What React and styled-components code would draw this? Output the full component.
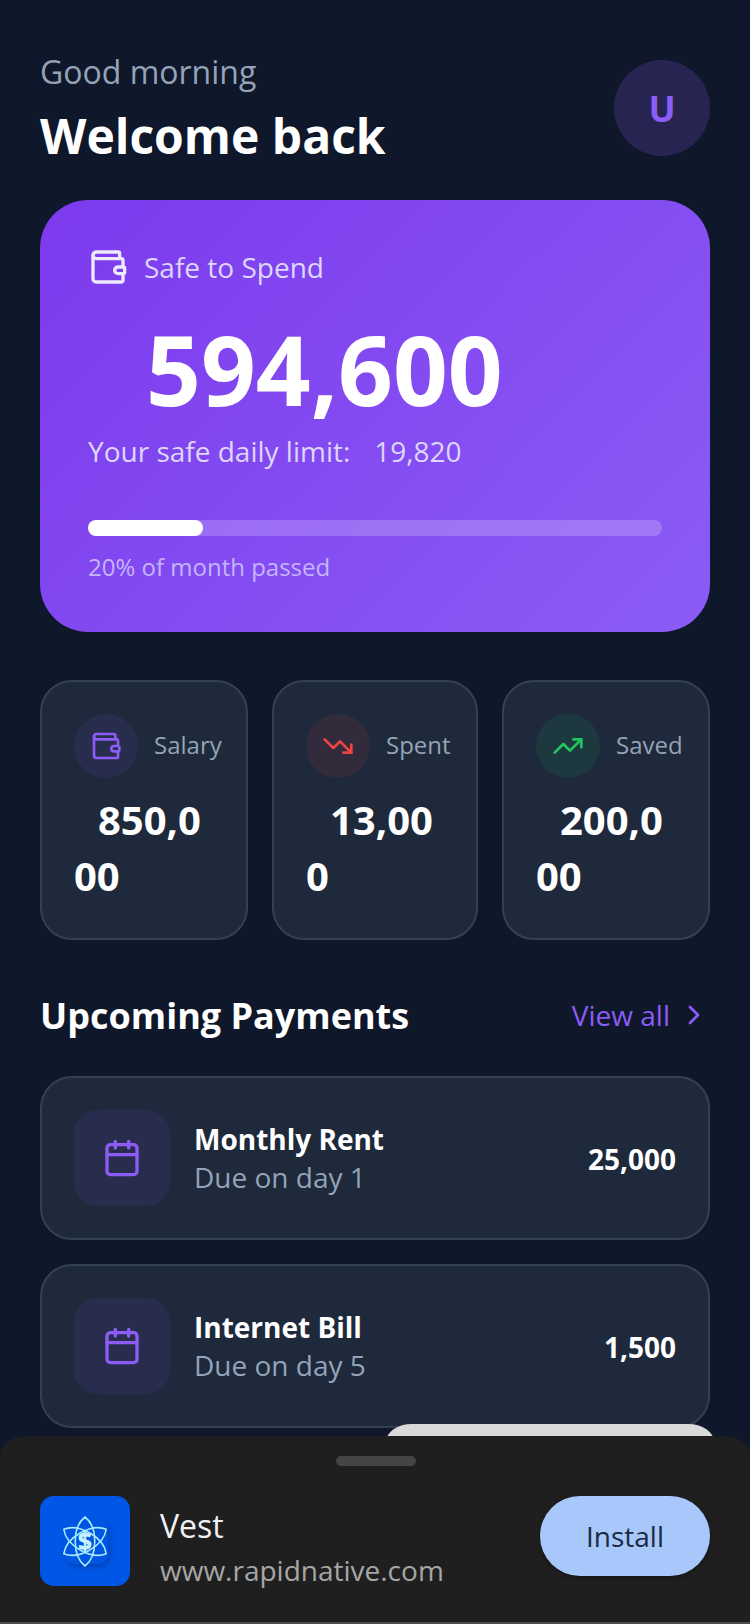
import React from "react";
import styled, { createGlobalStyle } from "styled-components";
import { Wallet, TrendingDown, TrendingUp, ChevronRight, Calendar } from "lucide-react";

const GlobalStyle = createGlobalStyle`
  html, body {
    margin: 0;
    padding: 0;
    background: #0f172a;
    font-family: "Open Sans", "Noto Sans", sans-serif;
  }
  * { box-sizing: border-box; }
`;

const Screen = styled.div`
  position: relative;
  width: 750px;
  height: 1624px;
  overflow: hidden;
  background: #0f172a;
`;

const Content = styled.div`
  padding: 48px 40px 0;
`;

const Header = styled.div`
  display: flex;
  justify-content: space-between;
  align-items: center;
  margin-bottom: 32px;
`;

const Greeting = styled.div`
  font-size: 32px;
  line-height: 48px;
  color: #94a3b8;
`;

const Title = styled.div`
  font-size: 48px;
  line-height: 72px;
  margin-top: 4px;
  margin-bottom: -4px;
  font-weight: 700;
  color: #fff;
`;

const Avatar = styled.div`
  width: 96px;
  height: 96px;
  border-radius: 50%;
  background: rgba(139, 92, 246, 0.2);
  color: #8b5cf6;
  font-size: 36px;
  font-weight: 700;
  display: flex;
  align-items: center;
  justify-content: center;
`;

const HeroCard = styled.div`
  height: 432px;
  border-radius: 48px;
  padding: 47px 48px 48px;
  background: linear-gradient(135deg, #7c3aed, #8b5cf6);
  margin-bottom: 48px;
`;

const HeroLabel = styled.div`
  display: flex;
  align-items: center;
  gap: 16px;
  font-size: 28px;
  line-height: 36px;
  color: #ddd6fe;
`;

const HeroAmount = styled.div`
  font-size: 96px;
  line-height: 112px;
  font-weight: 700;
  color: #fff;
  padding-left: 58px;
  margin-top: 26px;
`;

const HeroLimit = styled.div`
  font-size: 28px;
  line-height: 40px;
  color: #ddd6fe;
  margin-top: 6px;
`;

const LimitValue = styled.span`
  margin-left: 24px;
`;

const Track = styled.div`
  height: 16px;
  margin-top: 49px;
  border-radius: 8px;
  background: rgba(255, 255, 255, 0.2);
`;

const Fill = styled.div`
  height: 100%;
  border-radius: 8px;
  background: #fff;
`;

const TrackNote = styled.div`
  margin-top: 15px;
  font-size: 24px;
  line-height: 32px;
  color: #c4b5fd;
`;

const Stats = styled.div`
  display: grid;
  grid-template-columns: 208px 206px 208px;
  gap: 24px;
  margin-bottom: 48px;
`;

const StatCard = styled.div`
  height: 260px;
  padding: 32px;
  border-radius: 32px;
  background: #1e293b;
  border: 2px solid #334155;
`;

const StatTop = styled.div`
  display: flex;
  align-items: center;
  gap: 16px;
  margin-bottom: 14px;
`;

const IconCircle = styled.div`
  flex: none;
  width: 64px;
  height: 64px;
  border-radius: 50%;
  display: flex;
  align-items: center;
  justify-content: center;
  background: ${({ $tint }) => $tint};
  color: ${({ $color }) => $color};
`;

const StatLabel = styled.div`
  font-size: 24px;
  line-height: 30px;
  padding-bottom: 2px;
  color: #94a3b8;
`;

const StatValue = styled.div`
  font-size: 40px;
  line-height: 56px;
  font-weight: 700;
  color: #fff;
  text-indent: 24px;
  word-break: break-all;
`;

const SectionHead = styled.div`
  display: flex;
  justify-content: space-between;
  align-items: center;
  margin-bottom: 32px;
`;

const SectionTitle = styled.div`
  font-size: 36px;
  line-height: 56px;
  font-weight: 700;
  color: #fff;
`;

const ViewAll = styled.div`
  display: flex;
  align-items: center;
  gap: 8px;
  font-size: 28px;
  line-height: 40px;
  padding-bottom: 2px;
  color: #8b5cf6;
`;

const PaymentList = styled.div`
  display: flex;
  flex-direction: column;
  gap: 24px;
`;

const PaymentCard = styled.div`
  height: 164px;
  padding: 32px;
  border-radius: 32px;
  background: #1e293b;
  border: 2px solid #334155;
  display: flex;
  align-items: center;
  gap: 24px;
`;

const PaymentIcon = styled.div`
  flex: none;
  width: 96px;
  height: 96px;
  border-radius: 24px;
  background: rgba(139, 92, 246, 0.1);
  color: #8b5cf6;
  display: flex;
  align-items: center;
  justify-content: center;
`;

const PaymentInfo = styled.div`
  flex: 1;
`;

const PaymentName = styled.div`
  font-size: 28px;
  line-height: 38px;
  font-weight: 700;
  color: #fff;
`;

const PaymentDue = styled.div`
  font-size: 28px;
  line-height: 38px;
  color: #94a3b8;
`;

const PaymentAmount = styled.div`
  font-size: 28px;
  font-weight: 700;
  padding-top: 2px;
  color: #fff;
`;

const BackPill = styled.div`
  position: absolute;
  left: 386px;
  top: 1424px;
  width: 328px;
  height: 60px;
  border-radius: 26px 26px 0 0 / 18px 18px 0 0;
  background: #dadada;
`;

const SheetBackdrop = styled.div`
  position: absolute;
  left: 0;
  right: 0;
  top: 1453px;
  bottom: 0;
  background: #1f1f1f;
`;

const Sheet = styled.div`
  position: absolute;
  left: 0;
  right: 0;
  top: 1436px;
  height: 186px;
  border-radius: 28px 28px 0 0 / 18px 18px 0 0;
  background: #1f1f1f;
  padding: 20px 40px 0;
`;

const Handle = styled.div`
  width: 80px;
  height: 10px;
  margin: 0 0 30px 296px;
  border-radius: 5px;
  background: #444;
`;

const SheetRow = styled.div`
  display: flex;
  align-items: flex-start;
`;

const AppIcon = styled.div`
  flex: none;
  width: 90px;
  height: 90px;
  border-radius: 14px;
  background: #0057e7;
  display: flex;
  align-items: center;
  justify-content: center;
`;

const AppInfo = styled.div`
  flex: 1;
  margin-left: 30px;
`;

const AppName = styled.div`
  font-size: 32px;
  line-height: 44px;
  color: #f1f1f1;
  margin-top: 8px;
`;

const AppUrl = styled.div`
  font-size: 28px;
  line-height: 40px;
  margin-top: 2px;
  color: #a6a6a6;
`;

const InstallButton = styled.div`
  width: 170px;
  height: 80px;
  border-radius: 40px;
  background: #a8c7fa;
  color: #1b2a42;
  font-size: 28px;
  display: flex;
  align-items: center;
  justify-content: center;
  box-shadow: 0 2px 4px rgba(0, 0, 0, 0.3);
`;

const ScreenEdge = styled.div`
  position: absolute;
  left: 0;
  right: 0;
  bottom: 0;
  height: 2px;
  background: #4d4d4d;
`;

const petal = "M45 21 C58 31 58 60 45 70 C32 60 32 31 45 21 Z";

const VestLogo = () => (
  <svg width="90" height="90" viewBox="0 0 90 90" fill="none">
    <defs>
      <filter id="tile" x="-30%" y="-30%" width="170%" height="170%">
        <feDropShadow dx="2" dy="3" stdDeviation="3" floodColor="#00308f" floodOpacity="0.55" />
      </filter>
    </defs>
    <rect x="24" y="24" width="44" height="44" rx="10" fill="#0055e2" filter="url(#tile)" />
    <g stroke="#a5eaff" strokeWidth="1.6" strokeLinejoin="round">
      <path d={petal} />
      <path d={petal} transform="rotate(60 45 45.5)" />
      <path d={petal} transform="rotate(120 45 45.5)" />
    </g>
    <text
      x="45"
      y="54"
      textAnchor="middle"
      fontFamily="Open Sans, sans-serif"
      fontSize="24"
      fontWeight="800"
      fill="#c4f3ff"
    >
      $
    </text>
  </svg>
);

const stats = [
  { label: "Salary", value: "850,000", Icon: Wallet, color: "#8b5cf6", tint: "rgba(139, 92, 246, 0.1)" },
  { label: "Spent", value: "13,000", Icon: TrendingDown, color: "#ef4444", tint: "rgba(239, 68, 68, 0.1)" },
  { label: "Saved", value: "200,000", Icon: TrendingUp, color: "#22c55e", tint: "rgba(34, 197, 94, 0.1)" },
];

const payments = [
  { name: "Monthly Rent", due: "Due on day 1", amount: "25,000" },
  { name: "Internet Bill", due: "Due on day 5", amount: "1,500" },
];

export default function App() {
  return (
    <Screen>
      <GlobalStyle />
      <Content>
        <Header>
          <div>
            <Greeting>Good morning</Greeting>
            <Title>Welcome back</Title>
          </div>
          <Avatar>U</Avatar>
        </Header>

        <HeroCard>
          <HeroLabel>
            <Wallet size={40} color="#ede9fe" strokeWidth={2} />
            Safe to Spend
          </HeroLabel>
          <HeroAmount>594,600</HeroAmount>
          <HeroLimit>
            Your safe daily limit:
            <LimitValue>19,820</LimitValue>
          </HeroLimit>
          <Track>
            <Fill style={{ width: "20%" }} />
          </Track>
          <TrackNote>20% of month passed</TrackNote>
        </HeroCard>

        <Stats>
          {stats.map(({ label, value, Icon, color, tint }) => (
            <StatCard key={label}>
              <StatTop>
                <IconCircle $tint={tint} $color={color}>
                  <Icon size={32} strokeWidth={2} />
                </IconCircle>
                <StatLabel>{label}</StatLabel>
              </StatTop>
              <StatValue>{value}</StatValue>
            </StatCard>
          ))}
        </Stats>

        <SectionHead>
          <SectionTitle>Upcoming Payments</SectionTitle>
          <ViewAll>
            View all
            <ChevronRight size={32} strokeWidth={2} />
          </ViewAll>
        </SectionHead>

        <PaymentList>
          {payments.map((p) => (
            <PaymentCard key={p.name}>
              <PaymentIcon>
                <Calendar size={40} strokeWidth={2} />
              </PaymentIcon>
              <PaymentInfo>
                <PaymentName>{p.name}</PaymentName>
                <PaymentDue>{p.due}</PaymentDue>
              </PaymentInfo>
              <PaymentAmount>{p.amount}</PaymentAmount>
            </PaymentCard>
          ))}
        </PaymentList>
      </Content>

      <BackPill />
      <SheetBackdrop />
      <Sheet>
        <Handle />
        <SheetRow>
          <AppIcon>
            <VestLogo />
          </AppIcon>
          <AppInfo>
            <AppName>Vest</AppName>
            <AppUrl>www.rapidnative.com</AppUrl>
          </AppInfo>
          <InstallButton>Install</InstallButton>
        </SheetRow>
      </Sheet>
      <ScreenEdge />
    </Screen>
  );
}
